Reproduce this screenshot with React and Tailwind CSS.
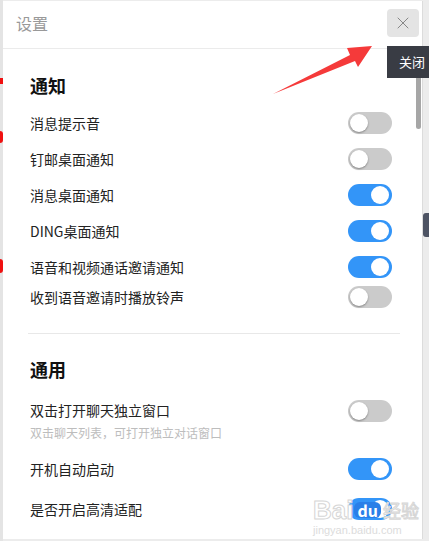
import React, { useState } from 'react';
import { X } from 'lucide-react';

const Toggle = ({ on }) => (
  <div
    className={`relative w-[44px] h-[22px] rounded-full shrink-0 ${on ? 'bg-[#3395f8]' : 'bg-[#cbcbcb]'}`}
  >
    <div
      className={`absolute top-[2px] w-[18px] h-[18px] rounded-full bg-white ${
        on ? 'right-[3px]' : 'left-[2px] shadow-[0_1px_2px_rgba(0,0,0,0.35)]'
      }`}
    />
  </div>
);

const Row = ({ label, on, className = 'h-[36px]' }) => (
  <div className={`flex items-center justify-between ${className}`}>
    <span className="text-[14px] text-[#222]">{label}</span>
    <Toggle on={on} />
  </div>
);

const App = () => {
  const [notify] = useState([
    { label: '消息提示音', on: false },
    { label: '钉邮桌面通知', on: false },
    { label: '消息桌面通知', on: true },
    { label: 'DING桌面通知', on: true },
    { label: '语音和视频通话邀请通知', on: true },
  ]);

  return (
    <div
      className="relative w-[429px] h-[541px] overflow-hidden bg-[#ececec] flex"
      style={{ fontFamily: '"Noto Sans CJK SC", "Noto Sans", sans-serif' }}
    >
      {/* left background strip */}
      <div className="relative w-[3px] shrink-0 bg-[#e4e4e4]">
        <div className="absolute left-0 top-[78px] w-[3px] h-[6px] bg-[#f01010]" />
        <div className="absolute left-0 top-[131px] w-[3px] h-[12px] rounded-r bg-[#f01010]" />
        <div className="absolute left-0 top-[259px] w-[3px] h-[14px] rounded-r bg-[#f01010]" />
      </div>

      {/* dialog */}
      <div className="relative mt-[1px] w-[420px] h-[538px] shrink-0 bg-white border-r border-[#dcdcdc] flex flex-col">
        <div className="h-[48px] shrink-0 flex items-center justify-between pl-[13px] pr-[3px] pb-[3px] border-b border-[#ebebeb]">
          <span className="text-[16px] text-[#999]">设置</span>
          <div className="w-[32px] h-[28px] rounded-[4px] bg-[#e4e4e4] flex items-center justify-center">
            <X size={20} strokeWidth={1.2} className="text-[#868686]" />
          </div>
        </div>

        <div className="pl-[27px] pr-[30px] pt-[24px]">
          <h2 className="text-[18px] font-bold leading-[24px] text-[#111] mb-[8px]">通知</h2>
          {notify.map((item) => (
            <Row key={item.label} label={item.label} on={item.on} />
          ))}
          <Row label="收到语音邀请时播放铃声" on={false} className="h-[24px]" />

          <div className="mt-[24px] -ml-[2px] w-[372px] h-px bg-[#e8e8e8]" />

          <h2 className="mt-[23px] text-[18px] font-bold leading-[24px] text-[#111]">通用</h2>
          <div className="mt-[19px] flex justify-between">
            <div className="flex flex-col">
              <span className="text-[14px] leading-[20px] text-[#222]">双击打开聊天独立窗口</span>
              <span className="mt-[4px] text-[12px] leading-[18px] text-[#bdbdbd]">双击聊天列表，可打开独立对话窗口</span>
            </div>
            <Toggle on={false} />
          </div>
          <Row label="开机自动启动" on={true} className="mt-[9px] h-[36px]" />
          <Row label="是否开启高清适配" on={true} className="mt-[4px] h-[36px]" />
        </div>

        {/* scrollbar */}
        <div className="absolute right-[1px] top-[50px] w-[5px] h-[78px] rounded-full bg-[#a6a6a6]" />

        {/* watermark */}
        <div className="absolute left-[310px] top-[496px] flex flex-col items-start pointer-events-none">
          <div className="flex items-center leading-none">
            <span className="text-[26px] font-bold text-white [-webkit-text-stroke:1px_#d6d6d6]" style={{ fontFamily: 'Arial, "Liberation Sans", sans-serif' }}>
              Bai
            </span>
            <span className="ml-[1px] px-[3px] rounded-[6px] bg-[#2a7fe8] text-[16px] font-bold text-white">du</span>
            <span className="ml-[2px] text-[18px] text-white [-webkit-text-stroke:1px_#d6d6d6]">经验</span>
          </div>
          <span className="text-[11px] text-[#dcdcdc] leading-[14px]" style={{ fontFamily: 'Arial, "Liberation Sans", sans-serif' }}>
            jingyan.baidu.com
          </span>
        </div>
      </div>

      {/* right background with item edge */}
      <div className="relative flex-1">
        <div className="absolute left-0 top-[213px] w-[6px] h-[24px] rounded-l-[3px] bg-[#4d5363]" />
      </div>

      {/* tooltip */}
      <div className="absolute left-[387px] top-[46px] h-[32px] w-[46px] bg-[#393c44] text-white text-[13px] flex items-center pl-[12px]">
        关闭
      </div>

      {/* red arrow annotation */}
      <svg className="absolute left-0 top-0 pointer-events-none" width="429" height="541">
        <polygon points="273,94 350,55 347,48 372,46 358,67 355,61" fill="#f53a3a" />
      </svg>
    </div>
  );
};

export default App;
